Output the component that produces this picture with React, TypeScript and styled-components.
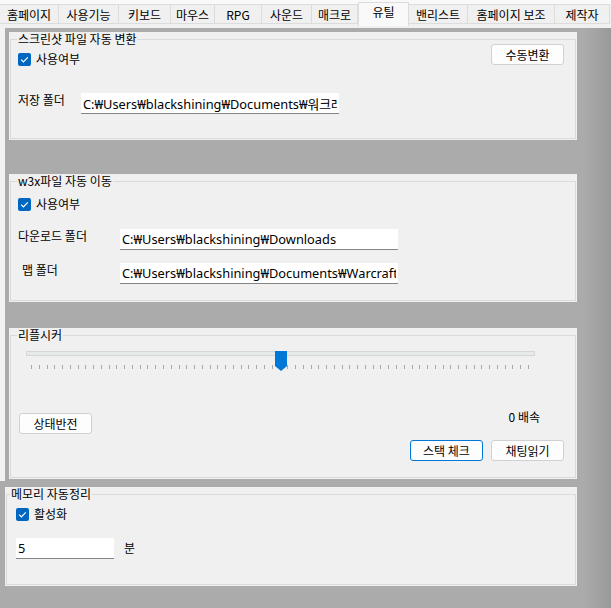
import React from 'react'
import styled, { createGlobalStyle } from 'styled-components'

const TABS = [
  { label: '홈페이지', width: 59 },
  { label: '사용기능', width: 60 },
  { label: '키보드', width: 52 },
  { label: '마우스', width: 44 },
  { label: 'RPG', width: 47 },
  { label: '사운드', width: 50 },
  { label: '매크로', width: 46 },
  { label: '유틸', width: 51, active: true },
  { label: '밴리스트', width: 59 },
  { label: '홈페이지 보조', width: 87 },
  { label: '제작자', width: 55 },
]

const TICK_COUNT = 65

const Check: React.FC<{ label: string }> = ({ label }) => (
  <CheckRow>
    <CheckBox>
      <svg width='13' height='13' viewBox='0 0 13 13'>
        <path d='M3.2 6.6 L5.4 8.8 L9.8 4.3' fill='none' stroke='#fff' strokeWidth='1.2' />
      </svg>
    </CheckBox>
    <span>{label}</span>
  </CheckRow>
)

export default function App() {
  return (
    <>
      <GlobalStyle />
      <Window>
        <TabStrip>
          {TABS.map((t) => (
            <Tab key={t.label} $width={t.width} $active={!!t.active}>
              {t.label}
            </Tab>
          ))}
        </TabStrip>
        <Body>
          <Upper>
            <Panel $height={108} $gap={34}>
              <Group>
                <Legend $left={6}>스크린샷 파일 자동 변환</Legend>
                <Content $pad={7}>
                  <TopRow>
                    <Check label='사용여부' />
                    <Button $raise>수동변환</Button>
                  </TopRow>
                  <FieldRow $top={27}>
                    <FieldLabel $width={63}>저장 폴더</FieldLabel>
                    <TextBox $width={258} readOnly value='C:₩Users₩blackshining₩Documents₩워크래프트 III₩스크린샷' />
                  </FieldRow>
                </Content>
              </Group>
            </Panel>

            <Panel $height={128} $gap={26}>
              <Group>
                <Legend $left={6}>w3x파일 자동 이동</Legend>
                <Content $pad={7}>
                  <CheckWrap $top={9}>
                    <Check label='사용여부' />
                  </CheckWrap>
                  <FieldRow $top={18}>
                    <FieldLabel $width={102}>다운로드 폴더</FieldLabel>
                    <TextBox $width={278} readOnly value='C:₩Users₩blackshining₩Downloads' />
                  </FieldRow>
                  <FieldRow $top={13}>
                    <FieldLabel $width={102} $indent={4}>맵 폴더</FieldLabel>
                    <TextBox $width={278} readOnly value='C:₩Users₩blackshining₩Documents₩Warcraft III₩Maps' />
                  </FieldRow>
                </Content>
              </Group>
            </Panel>

            <Panel $height={151} $gap={1}>
              <Group>
                <Legend $left={6}>리플시커</Legend>
                <Content $pad={8}>
                  <Slider>
                    <Track />
                    <Ticks>
                      {Array.from({ length: TICK_COUNT }).map((_, i) => (
                        <Tick key={i} />
                      ))}
                    </Ticks>
                    <Thumb style={{ left: 249 }}>
                      <svg width='12' height='20' viewBox='0 0 12 20'>
                        <polygon points='0,0 12,0 12,15 6,20 0,15' fill='#0078d7' />
                      </svg>
                    </Thumb>
                  </Slider>
                  <SpeedRow>
                    <Button $drop>상태반전</Button>
                    <Speed>0 배속</Speed>
                  </SpeedRow>
                  <ButtonRow>
                    <Button $focused>스택 체크</Button>
                    <Button>채팅읽기</Button>
                  </ButtonRow>
                </Content>
              </Group>
            </Panel>
          </Upper>

          <Panel $height={99} $gap={0} $shift>
            <Group>
              <Legend $left={3}>메모리 자동정리</Legend>
              <Content $pad={9}>
                <CheckWrap $top={6}>
                  <Check label='활성화' />
                </CheckWrap>
                <FieldRow $top={17}>
                  <TextBox $width={98} readOnly value='5' />
                  <Unit>분</Unit>
                </FieldRow>
              </Content>
            </Group>
          </Panel>
        </Body>
      </Window>
    </>
  )
}

const GlobalStyle = createGlobalStyle`
  html, body {
    margin: 0;
    padding: 0;
    background: #ababab;
  }
  body {
    font-family: "Noto Sans CJK KR", "Noto Sans", sans-serif;
    font-size: 12px;
    color: #000;
  }
`

const Window = styled.div`
  width: 611px;
  height: 608px;
  overflow: hidden;
  display: flex;
  flex-direction: column;
`

const TabStrip = styled.div`
  height: 28px;
  flex: none;
  display: flex;
  align-items: flex-start;
  padding-top: 4px;
  box-sizing: border-box;
  background: linear-gradient(#f9f9f9 0 4px, #f0f0f0 4px);
`

const Tab = styled.div<{ $width: number; $active: boolean }>`
  width: ${(p) => p.$width}px;
  flex: none;
  box-sizing: border-box;
  height: ${(p) => (p.$active ? 24 : 20)}px;
  margin-top: ${(p) => (p.$active ? -2 : 0)}px;
  line-height: ${(p) => (p.$active ? 17 : 19)}px;
  text-align: center;
  white-space: nowrap;
  background: ${(p) => (p.$active ? '#f9f9f9' : '#f0f0f0')};
  border: 1px solid #dcdcdc;
  border-bottom: ${(p) => (p.$active ? 'none' : '1px solid #dcdcdc')};
  border-left-width: ${(p) => (p.$active ? 1 : 0)}px;
  color: #000;
`

const Body = styled.div`
  flex: 1;
  background: linear-gradient(to right, #ababab 0, #ababab 584px, #a2a2a2 598px, #999 611px);
`

const Upper = styled.div`
  width: 577px;
  box-sizing: border-box;
  border-left: 5px solid #f2f2f2;
  padding: 4px 0 1px 4px;
`

const Panel = styled.div<{ $height: number; $gap: number; $shift?: boolean }>`
  height: ${(p) => p.$height}px;
  margin-bottom: ${(p) => p.$gap}px;
  margin-top: ${(p) => (p.$shift ? 6 : 0)}px;
  margin-left: ${(p) => (p.$shift ? 5 : 0)}px;
  width: ${(p) => (p.$shift ? 572 : 568)}px;
  box-sizing: border-box;
  padding: 0 1px 1px 1px;
  background: #f0f0f0;
`

const Group = styled.fieldset`
  margin: 0;
  padding: 0;
  height: 100%;
  box-sizing: border-box;
  min-inline-size: 0;
  border: 1px solid #dadada;
`

const Legend = styled.legend<{ $left: number }>`
  margin-left: ${(p) => p.$left}px;
  padding: 0 1px;
  line-height: 14px;
  font-size: 12px;
`

const Content = styled.div<{ $pad: number }>`
  padding: 0 11px 0 ${(p) => p.$pad}px;
`

const TopRow = styled.div`
  display: flex;
  justify-content: space-between;
  align-items: flex-start;
  padding-top: 6px;
`

const CheckWrap = styled.div<{ $top: number }>`
  padding-top: ${(p) => p.$top}px;
`

const CheckRow = styled.label`
  display: flex;
  align-items: center;
  gap: 5px;
  height: 14px;
  line-height: 14px;
`

const CheckBox = styled.span`
  width: 13px;
  height: 13px;
  border-radius: 2px;
  background: #0067c0;
  display: flex;
`

const Button = styled.button<{ $raise?: boolean; $drop?: boolean; $focused?: boolean }>`
  width: 73px;
  height: 21px;
  margin-top: ${(p) => (p.$raise ? -8 : p.$drop ? 3 : 0)}px;
  padding: 0;
  font-family: "Noto Sans CJK KR", "Noto Sans", sans-serif;
  font-size: 12px;
  line-height: 19px;
  color: #000;
  background: #fdfdfd;
  border: 1px solid ${(p) => (p.$focused ? '#0078d7' : '#d0d0d0')};
  border-radius: 3px;
`

const FieldRow = styled.div<{ $top: number }>`
  display: flex;
  align-items: flex-start;
  margin-top: ${(p) => p.$top}px;
`

const FieldLabel = styled.span<{ $width: number; $indent?: number }>`
  width: ${(p) => p.$width}px;
  padding-left: ${(p) => p.$indent ?? 0}px;
  box-sizing: border-box;
  flex: none;
  line-height: 14px;
`

const TextBox = styled.input<{ $width: number }>`
  width: ${(p) => p.$width}px;
  height: 21px;
  box-sizing: border-box;
  padding: 0 2px;
  margin: 0;
  border: none;
  border-bottom: 1px solid #858585;
  background: #fff;
  font-family: "Noto Sans", "Noto Sans CJK KR", sans-serif;
  font-size: 12.8px;
  color: #000;
  outline: none;
`

const Unit = styled.span`
  margin-left: 10px;
  line-height: 20px;
`

const Slider = styled.div`
  position: relative;
  width: 509px;
  height: 24px;
  margin: 9px 0 0 7px;
`

const Track = styled.div`
  margin-top: 6px;
  height: 5px;
  box-sizing: border-box;
  border: 1px solid #d6d6d6;
  background: #e7eaea;
`

const Ticks = styled.div`
  display: flex;
  justify-content: space-between;
  margin: 9px 6px 0 5px;
  height: 4px;
`

const Tick = styled.span`
  width: 1px;
  height: 4px;
  background: #a6a6a6;
`

const Thumb = styled.div`
  position: absolute;
  top: 0;
  width: 12px;
  height: 20px;
  display: flex;
`

const SpeedRow = styled.div`
  display: flex;
  justify-content: space-between;
  align-items: flex-start;
  margin-top: 35px;
  padding-right: 24px;
`

const Speed = styled.span`
  line-height: 14px;
`

const ButtonRow = styled.div`
  display: flex;
  justify-content: flex-end;
  gap: 8px;
  margin-top: 6px;
`
